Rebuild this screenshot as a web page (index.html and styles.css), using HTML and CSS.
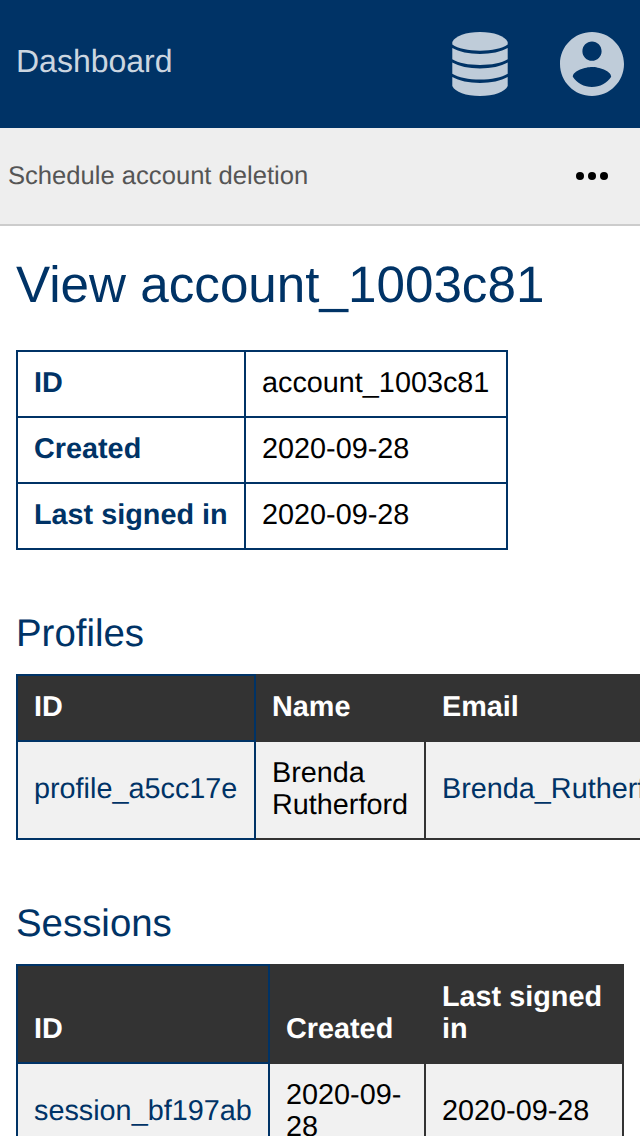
FILE: index.html
```html
<!DOCTYPE html>
<html lang="en">
<head>
<meta charset="utf-8">
<title>View account_1003c81</title>
<link rel="stylesheet" href="styles.css">
</head>
<body>
<header class="topbar">
  <a class="brand">Dashboard</a>
  <nav class="topnav">
    <svg class="icon-database" viewBox="0 0 56 64" aria-label="Data">
      <path d="M.3 10C3 4 14 0 28 0s25 4 27.700 10v2.600C50 16.600 40 18.800 28 18.800S6 16.600.3 12.600z"/>
      <path d="M.3 16.100C7 20 17 22 28 22s21-2 27.700-5.900v11.200C50 31 39 33 28 33S6 31 .3 27.300z"/>
      <path d="M.3 30.500C7 34.400 17 36.400 28 36.400s21-2 27.700-5.900v11.300C50 45.500 39 47.600 28 47.600S6 45.500.3 41.800z"/>
      <path d="M.3 45C7 48.900 17 50.900 28 50.900s21-2 27.700-5.900v9C53 60 42 64 28 64S3 60 .3 54z"/>
    </svg>
    <svg class="icon-account" viewBox="2 2 20 20" aria-label="Account">
      <path d="M12 2C6.480 2 2 6.480 2 12s4.480 10 10 10 10-4.480 10-10S17.520 2 12 2zm0 3c1.660 0 3 1.340 3 3s-1.340 3-3 3-3-1.340-3-3 1.340-3 3-3zm0 14.200c-2.500 0-4.710-1.280-6-3.220.03-1.990 4-3.080 6-3.080s5.970 1.090 6 3.080c-1.290 1.940-3.500 3.220-6 3.220z"/>
    </svg>
  </nav>
</header>
<div class="actions">
  <a class="action">Schedule account deletion</a>
  <svg class="icon-more" viewBox="0 0 32 8" aria-label="More"><circle cx="4" cy="4" r="4"/><circle cx="16" cy="4" r="4"/><circle cx="28" cy="4" r="4"/></svg>
</div>
<main class="content">
  <h1 class="title">View account_1003c81</h1>
  <table class="table details">
    <colgroup><col class="details-label"><col class="details-value"></colgroup>
    <tr><th>ID</th><td>account_1003c81</td></tr>
    <tr><th>Created</th><td>2020-09-28</td></tr>
    <tr><th>Last signed in</th><td>2020-09-28</td></tr>
  </table>
  <h2 class="subtitle">Profiles</h2>
  <div class="table-scroll">
    <table class="table list profiles">
      <colgroup><col class="profile-id"><col class="profile-name"><col class="profile-email"></colgroup>
      <thead><tr><th class="key">ID</th><th>Name</th><th>Email</th></tr></thead>
      <tbody><tr><td class="key"><a class="link">profile_a5cc17e</a></td><td>Brenda Rutherford</td><td><a class="link">Brenda_Rutherford</a></td></tr></tbody>
    </table>
  </div>
  <h2 class="subtitle">Sessions</h2>
  <table class="table list sessions">
    <colgroup><col class="session-id"><col class="session-created"><col class="session-last"></colgroup>
    <thead><tr><th class="key">ID</th><th>Created</th><th>Last signed in</th></tr></thead>
    <tbody><tr><td class="key"><a class="link">session_bf197ab</a></td><td>2020-09-28</td><td>2020-09-28</td></tr></tbody>
  </table>
</main>
</body>
</html>
```
FILE: styles.css
```css
* { box-sizing: border-box; }
html { overflow: hidden; }
body {
  margin: 0;
  height: 1136px;
  overflow: hidden;
  background: #fff;
  color: #000;
  font: 28.8px/32px "Liberation Sans", Arial, sans-serif;
  text-rendering: geometricPrecision;
}
.topbar {
  display: flex;
  align-items: center;
  justify-content: space-between;
  height: 128px;
  padding: 0 16px;
  background: #003366;
}
.brand { color: #ccd6e0; font-size: 32px; line-height: 36px; padding-bottom: 6px; }
.topnav { display: flex; gap: 52px; fill: #bfccd9; }
.icon-database { width: 56px; height: 64px; }
.icon-account { width: 64px; height: 64px; }
.actions {
  display: flex;
  align-items: center;
  justify-content: space-between;
  height: 98px;
  padding: 0 32px 0 8px;
  background: #eee;
  border-bottom: 2px solid #ccc;
}
.action { color: #555; font-size: 25.6px; }
.icon-more { width: 32px; height: 8px; }
.content { padding: 30px 16px 0; }
.title, .subtitle { margin: 0; color: #003366; font-weight: normal; }
.title { font-size: 51.2px; line-height: 58px; margin-bottom: 36px; }
.subtitle { font-size: 38.4px; line-height: 44px; margin: 62px 0 18px; }
.table { border-collapse: collapse; table-layout: fixed; }
.table th, .table td { padding: 15px 16px 17px; border: 2px solid #003366; text-align: left; }
.table-scroll { margin-right: -16px; overflow: hidden; }
.details { width: 492px; }
.details th { color: #003366; }
.details-label { width: 228px; }
.list th, .list td { border-color: #333; }
.list th { background: #333; color: #fff; vertical-align: bottom; }
.list td { background: #f1f1f1; }
.list .key { border-color: #003366; }
.link { color: #003366; }
.profiles { width: 840px; }
.profile-id { width: 238px; }
.profile-name { width: 170px; }
.sessions { width: 608px; }
.session-id { width: 252px; }
.session-created { width: 156px; }
```
